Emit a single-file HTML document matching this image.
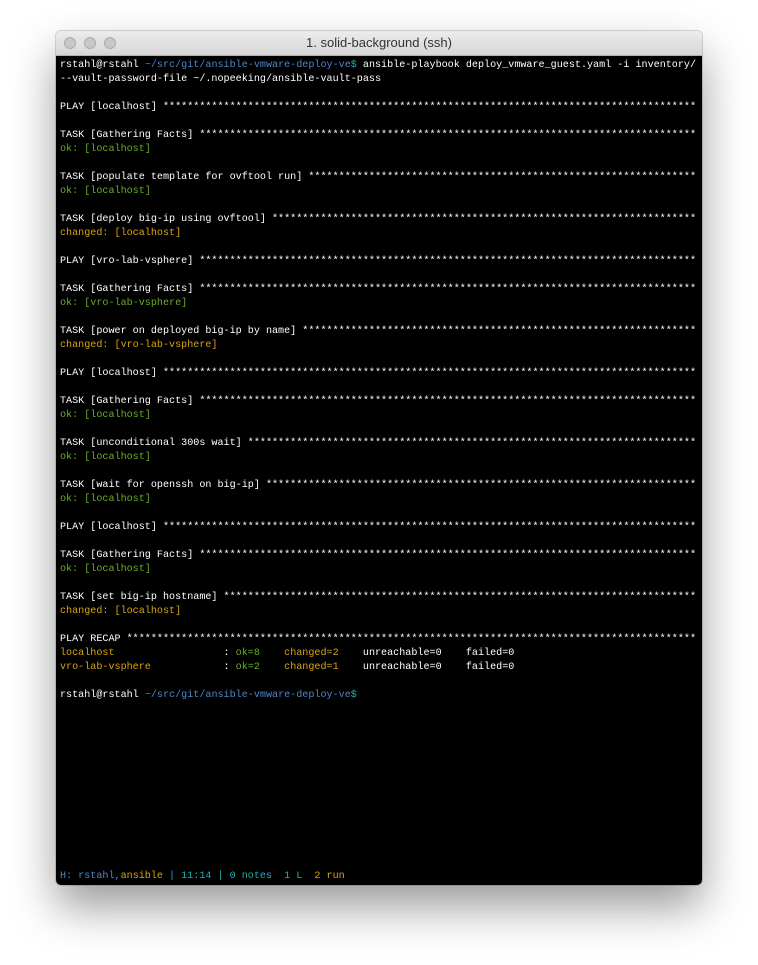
<!DOCTYPE html>
<html><head><style>
body{margin:0;width:758px;height:965px;background:#fff;position:relative;overflow:hidden;}
.win{position:absolute;left:56px;top:31px;width:646px;height:854px;border-radius:5px;overflow:hidden;box-shadow:0 22px 45px rgba(0,0,0,0.4),0 0 0 1px rgba(0,0,0,0.15);}
.tb{height:24px;background:linear-gradient(#ececec,#d6d6d6);border-bottom:1px solid #b0b0b0;position:relative;font-family:"Liberation Sans",sans-serif;font-size:13px;color:#333;text-align:center;line-height:24px;}
.dot{position:absolute;top:6px;width:12px;height:12px;border-radius:50%;background:#c8c8c8;border:1px solid #acacac;box-sizing:border-box;}
.term{background:#000;height:829px;padding:3px 5px 0 4px;box-sizing:border-box;font-family:"Liberation Mono",monospace;font-size:10.1px;line-height:14px;color:#fff;white-space:pre;overflow:hidden;position:relative;}
.term .in{overflow:hidden;}
.g{color:#6aad2a}.y{color:#d9a50e}.b{color:#4f86c6}.t{color:#1fb0b5}
.st{position:absolute;left:4px;top:814px;}
</style></head><body>
<div class="win">
<div class="tb"><div class="dot" style="left:8px"></div><div class="dot" style="left:28px"></div><div class="dot" style="left:48px"></div>1. solid-background (ssh)</div>
<div class="term"><div class="in">rstahl@rstahl <span class="b">~/src/git/ansible-vmware-deploy-ve</span><span class="t">$</span> ansible-playbook deploy_vmware_guest.yaml -i inventory/
--vault-password-file ~/.nopeeking/ansible-vault-pass

PLAY [localhost] *****************************************************************************************

TASK [Gathering Facts] ***********************************************************************************
<span class="g">ok: [localhost]</span>

TASK [populate template for ovftool run] *****************************************************************
<span class="g">ok: [localhost]</span>

TASK [deploy big-ip using ovftool] ***********************************************************************
<span class="y">changed: [localhost]</span>

PLAY [vro-lab-vsphere] ***********************************************************************************

TASK [Gathering Facts] ***********************************************************************************
<span class="g">ok: [vro-lab-vsphere]</span>

TASK [power on deployed big-ip by name] ******************************************************************
<span class="y">changed: [vro-lab-vsphere]</span>

PLAY [localhost] *****************************************************************************************

TASK [Gathering Facts] ***********************************************************************************
<span class="g">ok: [localhost]</span>

TASK [unconditional 300s wait] ***************************************************************************
<span class="g">ok: [localhost]</span>

TASK [wait for openssh on big-ip] ************************************************************************
<span class="g">ok: [localhost]</span>

PLAY [localhost] *****************************************************************************************

TASK [Gathering Facts] ***********************************************************************************
<span class="g">ok: [localhost]</span>

TASK [set big-ip hostname] *******************************************************************************
<span class="y">changed: [localhost]</span>

PLAY RECAP ***********************************************************************************************
<span class="y">localhost</span>                  : <span class="g">ok=8</span>    <span class="y">changed=2</span>    unreachable=0    failed=0
<span class="y">vro-lab-vsphere</span>            : <span class="g">ok=2</span>    <span class="y">changed=1</span>    unreachable=0    failed=0

rstahl@rstahl <span class="b">~/src/git/ansible-vmware-deploy-ve</span><span class="t">$</span></div>
<span class="st"><span class="b">H: rstahl,</span><span class="y">ansible</span><span class="t"> | 11:14 | 0 notes  1 L  </span><span class="y">2 run</span></span></div>
</div>
</body></html>
